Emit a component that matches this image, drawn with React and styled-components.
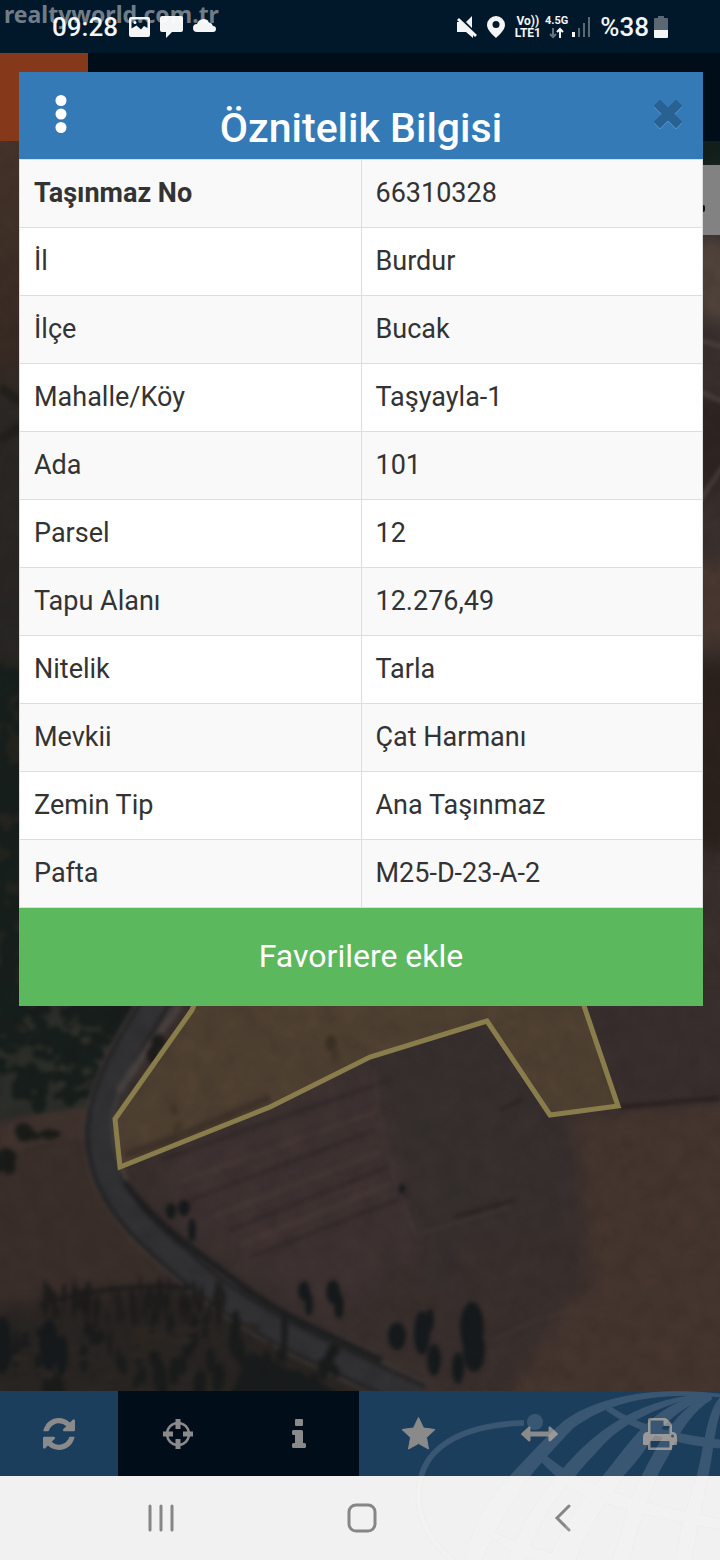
import React from 'react';
import styled, { createGlobalStyle } from 'styled-components';

const GlobalStyle = createGlobalStyle`
  * { box-sizing: border-box; }
  body { margin: 0; background: #011423; }
  button { border: 0; padding: 0; font: inherit; color: inherit; background: none; cursor: pointer; }
`;

const Screen = styled.div`
  position: relative;
  display: flex;
  flex-direction: column;
  min-height: 100vh;
  overflow: hidden;
  font-family: Roboto, "Liberation Sans", sans-serif;
`;

const StatusBar = styled.header`
  display: flex;
  align-items: center;
  justify-content: space-between;
  height: 53px;
  padding: 0 52px;
  background: #01182b;
  color: #f3f5f7;
`;

const StatusGroup = styled.div`
  display: flex;
  align-items: center;
  gap: ${props => props.$gap}px;
`;

const StatusText = styled.span`
  font-size: 26px;
  line-height: 32px;
  font-weight: 500;
`;

const StackedLabel = styled.span`
  display: flex;
  flex-direction: column;
  align-items: center;
  font-size: ${props => props.$size}px;
  line-height: 12px;
  font-weight: 700;
`;

const Watermark = styled.span`
  position: absolute;
  top: 0;
  left: 4px;
  font-family: "Noto Sans", sans-serif;
  font-size: 23px;
  line-height: 28px;
  font-weight: 700;
  color: rgba(255, 255, 255, 0.46);
`;

const Stage = styled.main`
  position: relative;
  flex: 1;
  display: flex;
  flex-direction: column;
  padding: 19px 17px 0 19px;
`;

const Backdrop = styled.div`
  position: absolute;
  inset: 0;
  display: flex;
  flex-direction: column;
`;

const AppBar = styled.div`
  height: 88px;
  background: #010e1a;
`;

const AppLogo = styled.div`
  width: 88px;
  height: 88px;
  background: #85391a;
`;

const MapPane = styled.div`
  position: relative;
  flex: 1;
  min-height: 0;
  background: #372e2c;
`;

const MapSvg = styled.svg`
  position: absolute;
  width: 100%;
  height: 100%;
`;

const LayerBox = styled.div`
  position: absolute;
  top: 24px;
  right: 0;
  width: 70px;
  height: 70px;
  background: #828282;
`;

const Modal = styled.section`
  position: relative;
  background: #fff;
`;

const ModalHeader = styled.div`
  display: grid;
  grid-template-columns: 83px 1fr 71px;
  height: 87px;
  background: #347ab7;
  color: #fff;
`;

const HeaderButton = styled.button`
  display: flex;
  align-items: center;
  justify-content: center;
  height: 84px;
`;

const Title = styled.h1`
  margin: 0;
  padding: 32px 12px 0 0;
  font-size: 41px;
  line-height: 48px;
  font-weight: 500;
  text-align: center;
  white-space: nowrap;
`;

const Table = styled.table`
  width: 100%;
  border-collapse: collapse;
  table-layout: fixed;
  font-size: 27px;
  line-height: 36px;
  color: #333;
`;

const Row = styled.tr`
  height: 68px;
  background: #fff;
  &:nth-child(odd) { background: #f9f9f9; }
`;

const Label = styled.th`
  padding: 0 14px 2px;
  border: 1px solid #ddd;
  font-weight: ${props => (props.$strong ? 700 : 400)};
  text-align: left;
`;

const Value = styled.td`
  padding: 0 14px 2px;
  border: 1px solid #ddd;
`;

const FavoriteButton = styled.button`
  display: block;
  width: 100%;
  height: 98px;
  padding-bottom: 2px;
  background: #5cb85c;
  color: #fff;
  font-size: 32px;
  line-height: 40px;
`;

const Toolbar = styled.nav`
  display: grid;
  grid-template-columns: 118px repeat(5, 1fr);
  height: 85px;
`;

const ToolButton = styled.button`
  display: flex;
  align-items: center;
  justify-content: center;
  background: ${props => (props.$dark ? '#010e1a' : '#1b3e5d')};
  color: #8a8a8a;
`;

const SystemNav = styled.nav`
  display: grid;
  grid-template-columns: 60px repeat(3, 1fr) 56px;
  height: 84px;
  background: #f1f1f1;
  color: #868686;
`;

const NavButton = styled.button`
  display: flex;
  align-items: center;
  justify-content: center;
  grid-column: ${props => props.$col};
`;

const Globe = styled.svg`
  position: absolute;
  right: 0;
  bottom: 0;
  pointer-events: none;
`;

const rows = [
  ['Taşınmaz No', '66310328'],
  ['İl', 'Burdur'],
  ['İlçe', 'Bucak'],
  ['Mahalle/Köy', 'Taşyayla-1'],
  ['Ada', '101'],
  ['Parsel', '12'],
  ['Tapu Alanı', '12.276,49'],
  ['Nitelik', 'Tarla'],
  ['Mevkii', 'Çat Harmanı'],
  ['Zemin Tip', 'Ana Taşınmaz'],
  ['Pafta', 'M25-D-23-A-2'],
];

const tools = [
  {
    name: 'Yenile',
    icon: (
      <svg width="32" height="32" viewBox="0 0 1536 1536" fill="currentColor">
        <path transform="matrix(1 0 0 -1 0 1536)" d="M1511 608q0-5-1-7q-64-268-268-434.5t-478-166.5q-146 0-282.5 55t-243.500 157l-129-129q-19-19-45-19t-45 19t-19 45v448q0 26 19 45t45 19h448q26 0 45-19t19-45t-19-45l-137-137q71-66 161-102t187-36q134 0 250 65t186 179q11 17 53 117q8 23 30 23h192q13 0 22.500-9.500t9.500-22.500zM1536 1408v-448q0-26-19-45t-45-19h-448q-26 0-45 19t-19 45t19 45l138 138q-148 137-349 137q-134 0-250-65t-186-179q-11-17-53-117q-8-23-30-23h-199q-13 0-22.500 9.500t-9.500 22.500v7q65 268 270 434.500t480 166.500q146 0 284-55.500t245-156.500l130 129q19 19 45 19t45-19t19-45z" />
      </svg>
    ),
  },
  {
    name: 'Konum',
    dark: true,
    icon: (
      <svg width="32" height="32" viewBox="0 0 32 32" fill="none" stroke="currentColor">
        <circle cx="16" cy="16" r="11" strokeWidth="2.500" />
        <path d="M16 1v10M16 21v10M1 16h10M21 16h10" strokeWidth="5" />
      </svg>
    ),
  },
  {
    name: 'Bilgi',
    dark: true,
    icon: (
      <svg width="14" height="30" viewBox="0 0 14 30" fill="currentColor">
        <rect x="3" y="0" width="8" height="7" rx="1" />
        <path d="M1.500 11h8q1.500 0 1.500 1.500V24h1.500q1.500 0 1.500 1.500v2q0 1.500-1.500 1.500H1.500Q0 29 0 27.500v-2Q0 24 1.500 24H3v-8H1.500Q0 16 0 14.500v-2Q0 11 1.500 11z" />
      </svg>
    ),
  },
  {
    name: 'Favoriler',
    icon: (
      <svg width="35" height="35" viewBox="0 0 35 35" fill="currentColor" stroke="currentColor" strokeLinejoin="round">
        <path d="M17.500 1.500l5 10.500 11.500 1.500-8.500 8 2 11.500-10-5.500-10 5.500 2-11.500-8.500-8 11.500-1.500z" />
      </svg>
    ),
  },
  {
    name: 'Ölçüm',
    icon: (
      <svg width="37" height="16" viewBox="0 0 37 16" fill="currentColor">
        <path d="M.5 7.200L7.500.8Q9.500 0 9.500 2v3.500h18V2q0-2 2-1.200l7 6.400q.8.800 0 1.600l-7 6.400q-2 .8-2-1.200v-3.500h-18V14q0 2-2 1.200L.5 8.800Q-.3 8 .5 7.200z" />
      </svg>
    ),
  },
  {
    name: 'Yazdır',
    icon: (
      <svg width="34" height="32" viewBox="0 0 34 32" fill="currentColor">
        <path fillRule="evenodd" d="M7 0h14.500q1.500 0 2.500 1l4 4q1 1 1 2.500V14q5 0 5 5v7q0 1-1 1h-4v4q0 1-1 1H6q-1 0-1-1v-4H1q-1 0-1-1v-7q0-5 5-5V2q0-2 2-2zM7.500 2.500V16h19V8H22q-1.500 0-1.500-1.500v-4zM7.500 23v6.500h19V23zM29.500 16.500a1.500 1.500 0 1 0 0 3 1.500 1.500 0 0 0 0-3z" />
      </svg>
    ),
  },
];

// fixed seed keeps the tree cover the same on every render
const seeded = seed => () => {
  seed = (seed * 16807) % 2147483647;
  return seed / 2147483647;
};

const scatter = (seed, count, x, y, w, h, rx, ry) => {
  const next = seeded(seed);
  return Array.from({ length: count }, () => ({
    cx: x + next() * w,
    cy: y + next() * h,
    rx: rx * (0.5 + next()),
    ry: ry * (0.5 + next()),
  }));
};

const forest = scatter(71, 150, -10, 1000, 135, 105, 8, 7);
const forestGaps = scatter(55, 60, -5, 1000, 120, 115, 4, 3);
const leftWood = scatter(17, 90, -4, 670, 26, 340, 7, 8);
const lowerWood = scatter(39, 80, 45, 1290, 180, 28, 2, 11);
const bottomWood = scatter(93, 60, 0, 1325, 340, 70, 4, 12);
const clearings = scatter(29, 30, 20, 1320, 260, 60, 12, 3);

const Trees = ({ items, color }) => (
  <g fill={color}>
    {items.map((t, i) => <ellipse key={i} {...t} />)}
  </g>
);

const road = 'M166 985C141 1030 106 1072 100 1128C98 1192 140 1228 196 1275C250 1320 300 1343 420 1398';
const parcel = 'M196 1000L192 1010L115 1119L120 1167L270 1107L370 1057L487 1021L550 1115L618 1106L582 1000';

const SatelliteMap = () => (
  <MapSvg viewBox="0 141 720 1250" preserveAspectRatio="xMidYMin slice" aria-hidden="true">
    <defs>
      <filter id="soft" x="-10%" y="-10%" width="120%" height="120%" colorInterpolationFilters="sRGB"><feGaussianBlur stdDeviation="2.2" /></filter>
      <filter id="wide" x="-20%" y="-20%" width="140%" height="140%" colorInterpolationFilters="sRGB"><feGaussianBlur stdDeviation="9" /></filter>
      <filter id="grain" x="0" y="0" width="100%" height="100%" colorInterpolationFilters="sRGB">
        <feTurbulence type="fractalNoise" baseFrequency="0.05" numOctaves="3" seed="8" />
        <feColorMatrix values="0 0 0 0 0.05  0 0 0 0 0.05  0 0 0 0 0.05  0.9 0.9 0 0 -0.6" />
      </filter>
      <linearGradient id="edge" x1="0" y1="0" x2="0" y2="1">
        <stop offset="0" stopColor="#46342b" />
        <stop offset="0.35" stopColor="#382b24" />
        <stop offset="0.45" stopColor="#2b2825" />
        <stop offset="1" stopColor="#272523" />
      </linearGradient>
    </defs>
    <rect y="141" width="720" height="1250" fill="#3a302e" />
    <rect y="141" width="40" height="620" fill="url(#edge)" />
    <g filter="url(#wide)">
      <path d="M-20 1140L90 1120L180 1270L120 1310L-20 1320z" fill="#3b2f2b" />
      <path d="M150 1150L370 1060L430 1240L330 1320L180 1220z" fill="#3f3332" />
      <path d="M375 1060L490 1025L560 1115L575 1250L430 1290z" fill="#37302f" />
      <path d="M575 1115L740 1100V1420H490L590 1270z" fill="#46362f" />
      <path d="M600 1000H740V1100H620z" fill="#3a2f2f" />
      <path d="M440 1250L580 1220L590 1290L490 1330z" fill="#3a302e" />
      <path d="M-20 1310L200 1280L380 1400V1420H-20z" fill="#292522" />
      <path d="M680 120H740V168L680 176z" fill="#12201c" />
      <path d="M690 240H740V330L690 310z" fill="#51443c" />
      <path d="M690 400H740V470L690 510z" fill="#2e2522" />
      <path d="M690 560H740V640L690 650z" fill="#493831" />
      <path d="M690 660H740V850H690z" fill="#2c211d" />
    </g>
    <g filter="url(#soft)">
      <path d="M700 340L724 347M700 392L724 402M700 500L724 465" stroke="#564c48" strokeWidth="3" />
      <path d="M0 388L22 402M0 440L22 425" stroke="#211f1c" strokeWidth="9" />
      <path d="M-5 985H160L95 1105L-5 1120z" fill="#2b2e29" />
      <rect x="-5" y="660" width="27" height="350" fill="#25251f" />
      <Trees items={forest} color="#171e1b" />
      <Trees items={forestGaps} color="#2f302a" />
      <Trees items={leftWood} color="#171f1c" />
      <path d="M0 1126Q45 1110 92 1108L88 1140Q40 1133 0 1165z" fill="#40332e" />
      <Trees items={scatter(12, 8, 22, 1130, 28, 10, 8, 6)} color="#1b1c19" />
      <Trees items={scatter(13, 5, -4, 1155, 14, 14, 6, 6)} color="#1b1c19" />
      <g fill="none" stroke="#342a2a" strokeWidth="4">
        <path d="M160 1160L390 1080M190 1200L375 1130M230 1230L390 1166M250 1257L410 1195" />
        <path d="M180 1182L380 1110M215 1216L380 1152M240 1245L390 1184" stroke="#463836" strokeWidth="5" />
      </g>
      <path d="M455 1217L515 1200M500 1110L523 1099" stroke="#2b2222" strokeWidth="3" />
      <path d="M620 1107L720 1098" stroke="#281e1f" strokeWidth="4" />
      <path d="M375 1070Q380 1150 418 1240M420 1234L510 1207M490 1341L530 1323L600 1300" fill="none" stroke="#443935" strokeWidth="2" />
      <path d={road} fill="none" stroke="#46413d" strokeWidth="34" />
      <path d={road} fill="none" stroke="#232223" strokeWidth="30" />
      <path d={road} fill="none" stroke="#323134" strokeWidth="22" />
      <path d="M180 1006L150 1045L118 1092" fill="none" stroke="#4a4340" strokeWidth="7" />
      <path d="M136 1065C118 1090 114 1105 113 1125C110 1180 150 1215 208 1262C260 1302 310 1325 380 1356" fill="none" stroke="#4c4744" strokeWidth="3" />
      <path d="M125 1182C150 1220 195 1250 245 1288C285 1316 320 1331 382 1360" fill="none" stroke="#1e1e20" strokeWidth="6" />
      <path d="M40 1305Q110 1282 190 1288" fill="none" stroke="#1d1c1b" strokeWidth="4" />
      <Trees items={lowerWood} color="#1e1d1c" />
      <Trees items={bottomWood} color="#1a1c1c" />
      <Trees items={clearings} color="#2d2723" />
      <path d="M250 1352Q300 1372 345 1396H230z" fill="#191c1d" />
      <g fill="#161a1c">
        <ellipse cx="2" cy="1345" rx="10" ry="28" />
        <ellipse cx="49" cy="1345" rx="9" ry="26" />
        <ellipse cx="62" cy="1355" rx="6" ry="20" />
        <ellipse cx="171" cy="1211" rx="5" ry="8" />
        <ellipse cx="184" cy="1208" rx="6" ry="8" />
        <ellipse cx="192" cy="1230" rx="4" ry="12" />
        <ellipse cx="304" cy="1291" rx="6" ry="10" />
        <ellipse cx="309" cy="1304" rx="4" ry="12" />
        <ellipse cx="333" cy="1292" rx="7" ry="12" />
        <ellipse cx="339" cy="1306" rx="5" ry="13" />
        <ellipse cx="397" cy="1336" rx="9" ry="14" />
        <ellipse cx="422" cy="1333" rx="8" ry="22" />
        <ellipse cx="430" cy="1320" rx="4" ry="12" />
        <ellipse cx="434" cy="1360" rx="7" ry="16" />
        <ellipse cx="472" cy="1328" rx="12" ry="26" />
        <ellipse cx="474" cy="1350" rx="11" ry="22" />
        <ellipse cx="458" cy="1368" rx="6" ry="16" />
        <ellipse cx="402" cy="1189" rx="3" ry="5" />
      </g>
    </g>
    <path d={`${parcel}z`} fill="#534433" fillOpacity="0.9" />
    <g filter="url(#soft)" fill="#1c1c1b">
      <ellipse cx="158" cy="1042" rx="7" ry="8" />
      <ellipse cx="153" cy="1055" rx="6" ry="9" />
      <ellipse cx="331" cy="1043" rx="6" ry="8" fill="#3a3023" />
      <ellipse cx="335" cy="1056" rx="4" ry="8" fill="#45382a" />
      <ellipse cx="174" cy="1110" rx="2" ry="5" fill="#40342a" />
      <ellipse cx="178" cy="1128" rx="5" ry="7" fill="#45382a" />
      <path d="M125 1155L175 1138L270 1098" stroke="#40332a" strokeWidth="8" fill="none" />
    </g>
    <rect y="141" width="720" height="1250" filter="url(#grain)" opacity="0.15" />
    <path d={parcel} fill="none" stroke="#8a7d4c" strokeWidth="5" />
  </MapSvg>
);

const meridians = [
  'M465 1562C469 1543 474 1530 480 1518C490 1498 500 1486 510 1476C526 1459 545 1438 563 1422C595 1398 650 1386 720 1394V1397C650 1391 607 1403 573 1428C555 1447 543 1460 530 1476C515 1495 500 1520 480 1562z',
  'M507 1562C518 1530 535 1503 557 1476C588 1438 630 1400 705 1394L700 1396C660 1405 620 1424 600 1448C589 1460 582 1467 575 1476C552 1500 535 1530 524 1562z',
  'M548 1562C562 1528 580 1503 603 1476C630 1444 650 1405 705 1394L707 1397C680 1408 661 1425 647 1446C638 1460 630 1468 623 1476C603 1505 584 1535 575 1562z',
  'M612 1562C621 1534 630 1500 642 1476C660 1441 676 1408 710 1395L712 1399C694 1410 680 1430 671 1450C666 1460 661 1467 657 1476C647 1500 636 1530 629 1562z',
  'M675 1562C680 1530 689 1500 697 1476C704 1450 707 1411 720 1398V1412C714 1430 713 1452 708 1476C704 1500 695 1530 692 1562z',
  'M606 1410L611 1407C640 1427 680 1435 720 1440V1448C676 1445 635 1431 606 1410z',
  'M538 1458L543 1453C565 1472 585 1482 613 1492C648 1504 680 1511 720 1519V1529C670 1521 635 1512 605 1503C576 1494 558 1480 538 1458z',
  'M492 1537L494 1532Q520 1546 563 1556V1562H540Q510 1552 492 1537z',
];

const orbit = 'M524 1423C468 1424 426 1444 420 1482C414 1514 428 1540 454 1562';

const GlobeMark = () => (
  <Globe width="320" height="180" viewBox="400 1380 320 180" aria-hidden="true">
    <g opacity="0.13" fill="#fff">
      {meridians.map(d => <path key={d} d={d} stroke="#e9a9a9" strokeWidth="1" />)}
      {meridians.map(d => <path key={d} d={d} />)}
      <path d={orbit} fill="none" stroke="#e9a9a9" strokeWidth="6" />
      <path d={orbit} fill="none" stroke="#fff" strokeWidth="5" />
      <circle cx="535" cy="1422" r="8" />
    </g>
  </Globe>
);

const App = () => (
  <Screen>
    <GlobalStyle />
    <StatusBar>
      <StatusGroup $gap={11}>
        <StatusText>09:28</StatusText>
        <StatusGroup $gap={10}>
          <svg width="21" height="20" viewBox="0 0 21 20">
            <path fill="currentColor" fillRule="evenodd" d="M2 0h17q2 0 2 2v16q0 2-2 2H2q-2 0-2-2V2Q0 0 2 0zM2.500 2.500v9l5-3 4.500 4L15 9l3.500 2V2.500zM6 4a1.500 1.500 0 1 1 0 3 1.500 1.500 0 0 1 0-3z" />
          </svg>
          <svg width="23" height="22" viewBox="0 0 23 22">
            <path fill="currentColor" d="M2 0h19q2 0 2 2v12q0 2-2 2H12l-6 6v-6H2q-2 0-2-2V2Q0 0 2 0z" />
          </svg>
          <svg width="23" height="20" viewBox="0 0 23 20">
            <path fill="currentColor" d="M4 15a4 4 0 0 1 0-8A6.500 6.500 0 0 1 16 5.500 5 5 0 0 1 20 9a3 3 0 0 1 0 6z" />
          </svg>
        </StatusGroup>
      </StatusGroup>
      <StatusGroup $gap={10}>
        <svg width="20" height="22" viewBox="0 0 20 22" fill="currentColor">
          <path d="M0 6h5l11 11v5l-7-6H0zM9 6l6-6v12z" />
          <path d="M0 0l19 19" stroke="#01182b" strokeWidth="2" />
          <path d="M1 3l18 17" stroke="currentColor" strokeWidth="3" />
        </svg>
        <svg width="18" height="22" viewBox="0 0 18 22">
          <path fill="currentColor" fillRule="evenodd" d="M9 0a9 9 0 0 1 9 9c0 5-6 10-9 13C6 19 0 14 0 9a9 9 0 0 1 9-9zM9 5a3.500 3.500 0 1 0 0 7 3.500 3.500 0 0 0 0-7z" />
        </svg>
        <StatusGroup $gap={4}>
          <StackedLabel $size={12}><span>Vo))</span><span>LTE1</span></StackedLabel>
          <StackedLabel $size={11}>
            <span>4.5G</span>
            <svg width="16" height="12" viewBox="0 0 16 12" fill="none" strokeWidth="2">
              <path d="M4 1v9M1 7l3 3 3-3" stroke="#66727e" />
              <path d="M11 11V2M8 5l3-3 3 3" stroke="currentColor" />
            </svg>
          </StackedLabel>
          <svg width="18" height="20" viewBox="0 0 18 20">
            <path d="M1.500 15v5" stroke="#f3f5f7" strokeWidth="3" />
            <path d="M7 11v9M12 6v14M17 0v20" stroke="#5b6773" strokeWidth="2" />
          </svg>
        </StatusGroup>
        <StatusGroup $gap={5}>
          <StatusText>%38</StatusText>
          <svg width="14" height="22" viewBox="0 0 14 22">
            <path d="M4 0h6v2h3q1 0 1 1v12H0V3q0-1 1-1h3z" fill="#5b6773" />
            <path d="M0 14h14v7q0 1-1 1H1q-1 0-1-1z" fill="#f3f5f7" />
          </svg>
        </StatusGroup>
      </StatusGroup>
    </StatusBar>
    <Stage>
      <Backdrop>
        <AppBar><AppLogo /></AppBar>
        <MapPane>
          <SatelliteMap />
          <LayerBox>
            <svg width="70" height="70" viewBox="0 0 70 70" aria-hidden="true">
              <rect x="46" y="40" width="9" height="7" rx="2" fill="#111" />
            </svg>
          </LayerBox>
        </MapPane>
      </Backdrop>
      <Modal>
        <ModalHeader>
          <HeaderButton aria-label="Menü">
            <svg width="12" height="38" viewBox="0 0 12 38" fill="#fff">
              <circle cx="6" cy="5.500" r="5.500" />
              <circle cx="6" cy="19" r="5.500" />
              <circle cx="6" cy="32.500" r="5.500" />
            </svg>
          </HeaderButton>
          <Title>Öznitelik Bilgisi</Title>
          <HeaderButton aria-label="Kapat">
            <svg width="28" height="30" viewBox="0 0 28 30" strokeWidth="2" strokeLinejoin="round">
              <path d="M6 3l8 8 8-8 5 5-8 8 8 8-5 5-8-8-8 8-5-5 8-8-8-8z" fill="#5a97cb" stroke="#5a97cb" />
              <path d="M6 2l8 8 8-8 5 5-8 8 8 8-5 5-8-8-8 8-5-5 8-8-8-8z" fill="#296292" stroke="#296292" />
            </svg>
          </HeaderButton>
        </ModalHeader>
        <Table>
          <tbody>
            {rows.map(([label, value], i) => (
              <Row key={label}>
                <Label scope="row" $strong={i === 0}>{label}</Label>
                <Value>{value}</Value>
              </Row>
            ))}
          </tbody>
        </Table>
        <FavoriteButton>Favorilere ekle</FavoriteButton>
      </Modal>
    </Stage>
    <Toolbar>
      {tools.map(tool => (
        <ToolButton key={tool.name} $dark={tool.dark} aria-label={tool.name}>{tool.icon}</ToolButton>
      ))}
    </Toolbar>
    <SystemNav>
      <NavButton $col={2} aria-label="Son uygulamalar">
        <svg width="26" height="28" viewBox="0 0 26 28" stroke="currentColor" strokeWidth="3" strokeLinecap="round">
          <path d="M2 2v24M13 2v24M24 2v24" />
        </svg>
      </NavButton>
      <NavButton $col={3} aria-label="Ana ekran">
        <svg width="30" height="30" viewBox="0 0 30 30" fill="none" stroke="currentColor" strokeWidth="3">
          <rect x="2" y="2" width="26" height="26" rx="7" />
        </svg>
      </NavButton>
      <NavButton $col={4} aria-label="Geri">
        <svg width="18" height="28" viewBox="0 0 18 28" fill="none" stroke="currentColor" strokeWidth="3" strokeLinecap="round">
          <path d="M15 2L3 14l12 12" />
        </svg>
      </NavButton>
    </SystemNav>
    <Watermark>realtyworld.com.tr</Watermark>
    <GlobeMark />
  </Screen>
);

export default App;
